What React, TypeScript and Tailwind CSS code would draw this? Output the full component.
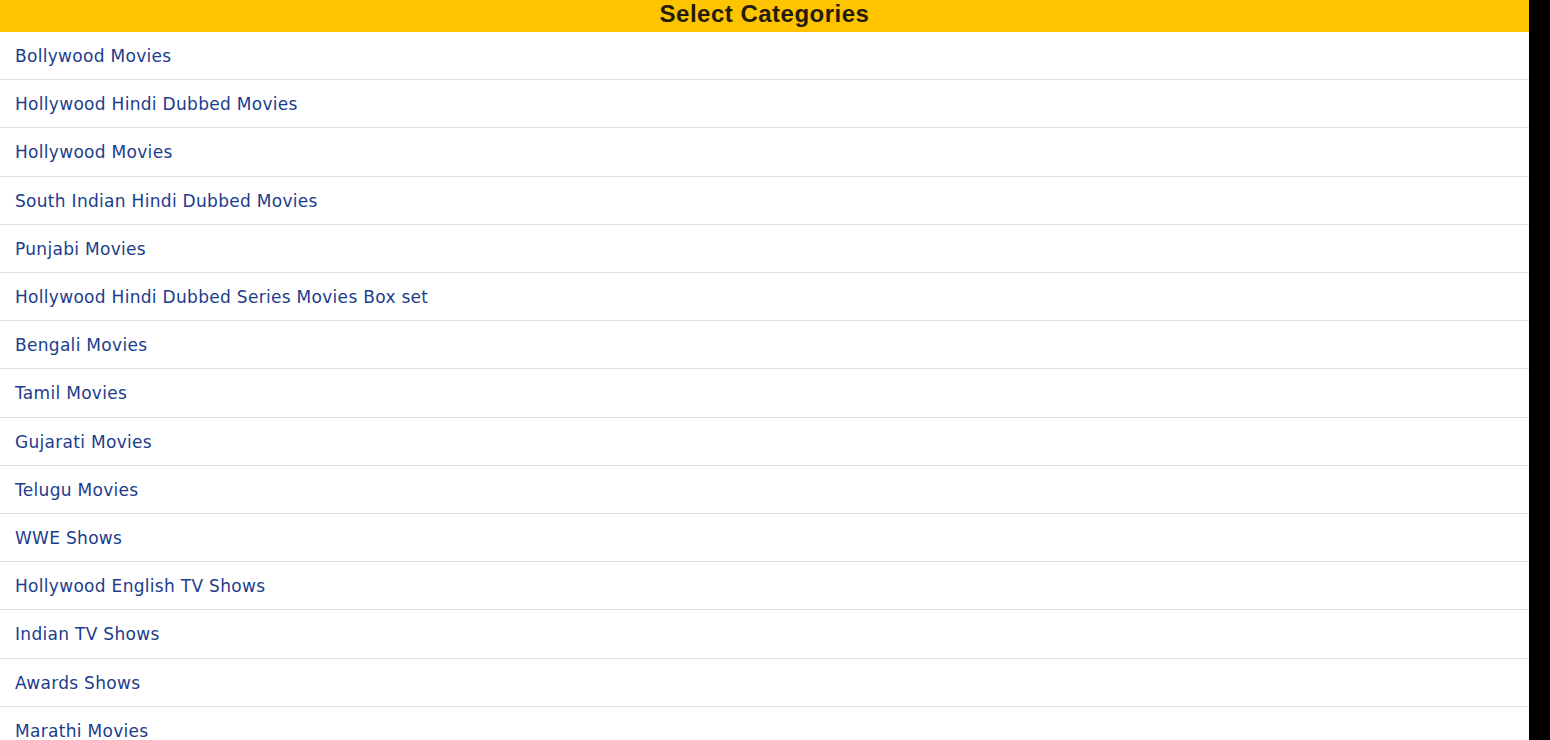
import React from "react";

const items = [
  "Bollywood Movies",
  "Hollywood Hindi Dubbed Movies",
  "Hollywood Movies",
  "South Indian Hindi Dubbed Movies",
  "Punjabi Movies",
  "Hollywood Hindi Dubbed Series Movies Box set",
  "Bengali Movies",
  "Tamil Movies",
  "Gujarati Movies",
  "Telugu Movies",
  "WWE Shows",
  "Hollywood English TV Shows",
  "Indian TV Shows",
  "Awards Shows",
  "Marathi Movies",
  "Kannada Movies",
  "Malayalam Movies",
];

export default function App() {
  return (
    <div className="flex h-[740px] w-full overflow-hidden bg-black">
      <div className="w-[1529px] shrink-0 bg-white">
        <div className="h-[32px] bg-[#ffc400] text-center font-['Liberation_Sans',Arial,sans-serif] text-[24px] font-bold leading-[27px] tracking-[0.5px] text-[#231c0c]">
          Select Categories
        </div>
        <div>
          {items.map((t) => (
            <div
              key={t}
              className="border-b border-[#e6dce1] px-[15px] pt-[15px] pb-[13px] font-['DejaVu_Sans',Verdana,sans-serif] text-[17px] leading-[19.2px] tracking-[0.3px] text-[#1c3d8c]"
            >
              {t}
            </div>
          ))}
        </div>
      </div>
    </div>
  );
}
